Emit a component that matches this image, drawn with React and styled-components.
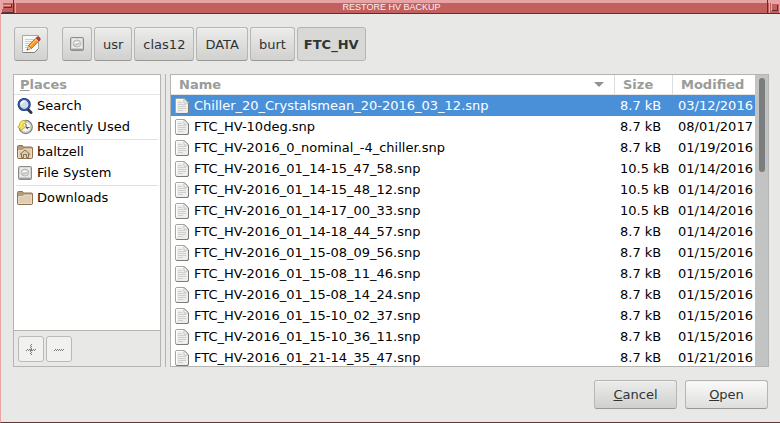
import React from 'react';
import styled, { createGlobalStyle, css } from 'styled-components';

const Global = createGlobalStyle`
  * { box-sizing: border-box; }
  body { margin: 0; background: #e8e8e6; }
  button { margin: 0; font: inherit; color: inherit; }
  body, table { font: 13px/21px "DejaVu Sans", sans-serif; color: #000; }
`;

const Frame = styled.div`
  height: 100vh;
  min-height: 300px;
  display: flex;
  flex-direction: column;
  overflow: hidden;
  border-left: 1px solid #eda6a6;
  border-bottom: 1px solid #5e3838;
`;

const TitleBar = styled.header`
  flex: none;
  display: flex;
  height: 14px;
  margin-left: -1px;
  background: linear-gradient(#e8a4a4 3px, #c26060 3px);
  border-bottom: 1px solid #5a3034;
`;

const Title = styled.h1`
  flex: 1;
  margin: 0;
  border-left: 1px solid #e8a4a4;
  border-right: 1px solid #5a3034;
  font: 9px/14px "Liberation Sans", sans-serif;
  text-align: center;
  color: #fff0ee;
`;

const WindowButton = styled.button`
  display: flex;
  padding: 0;
  border: 0;
  background: none;
`;

const Body = styled.main`
  flex: 1;
  min-height: 0;
  display: flex;
  flex-direction: column;
  gap: 13px;
  padding: 13px 11px 13px 12px;
`;

const PathBar = styled.nav`
  display: flex;
  gap: 2px;
`;

const Button = styled.button`
  display: flex;
  align-items: center;
  justify-content: center;
  padding: 0 8px;
  border: 1px solid #b6b6b3;
  border-bottom-color: #989896;
  border-radius: 3px;
  background: linear-gradient(#ececea, #d0d0ce);
  box-shadow: inset 0 1px #f2f2f1;
  color: #2e3436;
`;

const PathButton = styled(Button)`
  height: 34px;
  padding: 0 ${p => (p.$icon ? '6px' : '8px')};
  ${p => p.$current && css`
    border-color: #b4b4b1;
    background: #d8d8d6;
    box-shadow: none;
    font-weight: bold;
    padding: 0 6px;
  `}
`;

const EditButton = styled(PathButton)`
  width: 34px;
  margin: 0 12px 0 1px;
`;

const Panes = styled.div`
  flex: 1;
  min-height: 0;
  display: flex;
`;

const Places = styled.aside`
  width: 148px;
  display: flex;
  flex-direction: column;
  border: 1px solid #b4b4b1;
`;

const PlacesList = styled.div`
  flex: 1;
  min-height: 0;
  overflow: hidden;
  background: #fff;
`;

const PlacesTitle = styled.h2`
  height: 20px;
  margin: 0;
  padding-left: 6px;
  border-bottom: 1px solid #e4e4e4;
  font: bold 13px/19px "DejaVu Sans", sans-serif;
  color: #999c99;
`;

const Place = styled.a`
  display: flex;
  align-items: center;
  gap: 4px;
  height: 21px;
  padding-left: 3px;
  color: #000;
  text-decoration: none;
`;

const Separator = styled.hr`
  height: 1px;
  margin: 2px 2px 1px;
  border: 0;
  background: #e0e0e0;
`;

const PlacesTools = styled.div`
  display: flex;
  gap: 2px;
  padding: 5px 4px 4px;
  border-top: 1px solid #b4b4b1;
`;

const ToolButton = styled(Button)`
  width: 26px;
  height: 26px;
  padding: 0;
  border-color: #b9b9b7;
  background: #f1f1f0;
`;

const Splitter = styled.div`
  width: 9px;
  padding-left: 4px;
  &::before {
    content: "";
    display: block;
    width: 1px;
    height: 100%;
    background: #b4b4b1;
  }
`;

const Files = styled.section`
  flex: 1;
  min-width: 0;
  display: flex;
  border: 1px solid #b4b4b1;
  background: #fff;
`;

const TableArea = styled.div`
  flex: 1;
  min-width: 0;
  overflow: hidden;
`;

const Table = styled.table`
  width: 100%;
  table-layout: fixed;
  border-collapse: separate;
  border-spacing: 0;
`;

const Head = styled.th`
  width: ${p => p.$width || 'auto'};
  height: 20px;
  padding: 0 10px 0 8px;
  border-bottom: 1px solid #e4e4e4;
  border-right: ${p => (p.$last ? '0' : '1px solid #dededd')};
  line-height: 19px;
  text-align: left;
  white-space: nowrap;
  color: #999c99;
`;

const HeadRow = styled.span`
  display: flex;
  align-items: center;
  justify-content: space-between;
`;

const Row = styled.tr`
  background: ${p => (p.$selected ? '#4a90d9' : '#fff')};
  color: ${p => (p.$selected ? '#fff' : '#000')};
`;

const Cell = styled.td`
  height: 21px;
  padding: 0 0 0 5px;
  white-space: nowrap;
`;

const FileName = styled.span`
  display: flex;
  align-items: center;
  gap: 5px;
  margin-left: -1px;
`;

const ScrollTrack = styled.div`
  width: 13px;
  padding: 3px 3px 3px 4px;
  background: #c2c4c3;
`;

const ScrollThumb = styled.div`
  width: 6px;
  height: 33%;
  border-radius: 3px;
  background: #7a7e7e;
`;

const Actions = styled.footer`
  display: flex;
  justify-content: flex-end;
  gap: 8px;
  padding-right: 1px;
`;

const ActionButton = styled(Button)`
  width: 83px;
  height: 29px;
  ${p => p.$light && 'background: linear-gradient(#fafafa, #dededc);'}
`;

const Svg = styled.svg`
  flex: none;
  display: block;
`;

const DriveIcon = () => (
  <Svg width="16" height="16" viewBox="0 0 16 16">
    <rect x="1.500" y="1.500" width="13" height="13" rx="1" fill="#c9cbc8" stroke="#8b8d89" />
    <path d="M3 2.500h10l.5 9.500h-11z" fill="#ecedeb" />
    <path d="M2 13.500h12" stroke="#9fa19d" />
    <ellipse cx="8" cy="7.500" rx="4" ry="3.500" fill="#dddedb" stroke="#b9bbb7" />
    <path d="M5 10c1-2 3.500-1 5.500-3" fill="none" stroke="#b0b2ae" />
    <path d="M6 6.500h3.500" stroke="#fff" />
  </Svg>
);

const FolderIcon = ({ home }) => (
  <Svg width="16" height="16" viewBox="0 0 16 16">
    <path d="M.5 13.500V2.500Q.5 1.500 1.500 1.500h4l1 1.500h8q1 0 1 1v9.500q0 1-1 1h-13q-1 0-1-1z" fill="#b59b78" stroke="#8c7354" />
    <path d="M1.500 13.500v-7h4.500l1-1.500h7.500v8.500z" fill="#dfccb1" stroke="#eadbc5" />
    {home && (
      <path d="M3 10.500l5-4.500 5 4.500M4.500 9.500v4h2v-3h3v3h2v-4" fill="none" stroke="#8c704d" />
    )}
  </Svg>
);

const SearchIcon = () => (
  <Svg width="16" height="16" viewBox="0 0 16 16">
    <path d="M11 11.500l3 3" stroke="#34363f" strokeWidth="3" strokeLinecap="round" />
    <circle cx="7.200" cy="6.500" r="5.500" fill="#cfdcec" stroke="#1f3a84" strokeWidth="2.200" />
    <circle cx="7.200" cy="6.500" r="5.200" fill="none" stroke="#4a6fc0" strokeWidth=".8" />
    <path d="M4 6.500C4 4.500 5.500 3.500 7.500 3.500" fill="none" stroke="#fff" strokeWidth="1.500" />
  </Svg>
);

const RecentIcon = () => (
  <Svg width="16" height="16" viewBox="0 0 16 16">
    <circle cx="8.700" cy="8" r="6.600" fill="#d9dad6" stroke="#7f817b" strokeWidth="1.200" />
    <circle cx="8.700" cy="8" r="5" fill="#f5f5f3" stroke="#c4c6c0" strokeWidth=".8" />
    <path d="M9 5v3.500h3.500M9 8.500l2 1.500" fill="none" stroke="#555753" />
    <path d="M.6 8L2.500 6.200C2.500 3 4.500 1.600 8.500 1.600V4.500C6.500 4.500 6 5.200 6 6.400L8 8.500 4.500 11z" fill="#f3df4d" stroke="#c7a91e" strokeWidth=".8" />
    <path d="M3.500 7.500C3.500 4.500 4.500 3 7 2.700" fill="none" stroke="#fff6a3" strokeWidth=".8" />
  </Svg>
);

const FileIcon = () => (
  <Svg width="14" height="16" viewBox="0 0 14 16">
    <path d="M2 .5h7.500l4 4V14q0 1.500-1.500 1.500H2Q.5 15.500.5 14V2Q.5.5 2 .5z" fill="#eeeeec" stroke="#a2a4a0" />
    <path d="M1.500 15.500H12q1.500 0 1.500-1.500V5" fill="none" stroke="#7a7c78" />
    <path d="M1.500 13.500v-12h7" fill="none" stroke="#fff" />
    <path d="M3 4.500h4M3 6.500h8M3 8.500h8M3 10.500h8M3 12.500h5" stroke="#cfd0cd" />
    <path d="M9 1v4h4z" fill="#fff" stroke="#b2b4b0" strokeWidth=".8" />
  </Svg>
);

const EditIcon = () => (
  <Svg width="20" height="20" viewBox="0 0 20 20">
    <path d="M1.500 1.500h16v13l-4 4h-12z" fill="#f8f8f7" stroke="#a6a8a4" />
    <path d="M2 18.500h11.500l4-4" fill="none" stroke="#7d7f7b" />
    <path d="M4 5.500h9M4 7.500h7M4 9.500h5M4 11.500h3M4 13.500h3" stroke="#cbcdc9" />
    <path d="M6 16l1.500-4.500 3 3z" fill="#f0d3a0" stroke="#a87839" strokeWidth=".6" />
    <path d="M7.500 11.500L15 4l3 3-7.500 7.500z" fill="#f29b2c" stroke="#a7651a" strokeWidth=".8" />
    <path d="M9 12l7-7" stroke="#fcc970" />
    <path d="M14 5l1-1 3 3-1 1z" fill="#c9ccd0" />
    <path d="M15.200 3.800q1.500-1.800 3.200-.4t0 3.400l-.4.400z" fill="#d93636" stroke="#a31c1c" strokeWidth=".7" />
    <path d="M5.500 16.500l1-1.800 1 1z" fill="#2e3436" />
  </Svg>
);

const DottedGlyph = ({ plus }) => (
  <Svg width="11" height="11" viewBox="0 0 11 11" shapeRendering="crispEdges">
    <path d="M1 5.500h10" stroke="#7b7e7c" strokeDasharray="1 1" />
    <path d="M0 6.500h10" stroke="#7b7e7c" strokeDasharray="1 1" />
    {plus && <path d="M5.500 0v11" stroke="#7b7e7c" strokeDasharray="1 1" />}
    {plus && <path d="M4.500 1v10" stroke="#7b7e7c" strokeDasharray="1 1" />}
  </Svg>
);

const files = [
  ['Chiller_20_Crystalsmean_20-2016_03_12.snp', '8.7 kB', '03/12/2016'],
  ['FTC_HV-10deg.snp', '8.7 kB', '08/01/2017'],
  ['FTC_HV-2016_0_nominal_-4_chiller.snp', '8.7 kB', '01/19/2016'],
  ['FTC_HV-2016_01_14-15_47_58.snp', '10.5 kB', '01/14/2016'],
  ['FTC_HV-2016_01_14-15_48_12.snp', '10.5 kB', '01/14/2016'],
  ['FTC_HV-2016_01_14-17_00_33.snp', '10.5 kB', '01/14/2016'],
  ['FTC_HV-2016_01_14-18_44_57.snp', '8.7 kB', '01/14/2016'],
  ['FTC_HV-2016_01_15-08_09_56.snp', '8.7 kB', '01/15/2016'],
  ['FTC_HV-2016_01_15-08_11_46.snp', '8.7 kB', '01/15/2016'],
  ['FTC_HV-2016_01_15-08_14_24.snp', '8.7 kB', '01/15/2016'],
  ['FTC_HV-2016_01_15-10_02_37.snp', '8.7 kB', '01/15/2016'],
  ['FTC_HV-2016_01_15-10_36_11.snp', '8.7 kB', '01/15/2016'],
  ['FTC_HV-2016_01_21-14_35_47.snp', '8.7 kB', '01/21/2016'],
];

export default function App() {
  return (
    <Frame>
      <Global />
      <TitleBar>
        <WindowButton aria-label="Window menu">
          <Svg width="15" height="13" viewBox="0 0 15 13" shapeRendering="crispEdges">
            <path d="M0 3h2v10H0z" fill="#e8a4a4" />
            <path d="M4 7.500h8M11.500 4v4M2 12.500h12M13.500 0v13" fill="none" stroke="#5a3034" />
            <path d="M3 5.500h8M2.500 3v6" stroke="#e8a4a4" />
          </Svg>
        </WindowButton>
        <Title>RESTORE HV BACKUP</Title>
        <WindowButton aria-label="Maximize">
          <Svg width="12" height="13" viewBox="0 0 12 13" shapeRendering="crispEdges">
            <path d="M1.500 0v13" stroke="#e8a4a4" />
            <path d="M3.500 10.500v-7h7" fill="none" stroke="#e8a4a4" />
            <path d="M3.500 10.500h6v-6" fill="none" stroke="#5a3034" />
            <path d="M11.500 3v10" stroke="#e8a4a4" />
          </Svg>
        </WindowButton>
      </TitleBar>
      <Body>
        <PathBar aria-label="Path">
          <EditButton $icon aria-label="Type a file name"><EditIcon /></EditButton>
          <PathButton $icon aria-label="File system root"><DriveIcon /></PathButton>
          <PathButton>usr</PathButton>
          <PathButton>clas12</PathButton>
          <PathButton>DATA</PathButton>
          <PathButton>burt</PathButton>
          <PathButton $current aria-current="page">FTC_HV</PathButton>
        </PathBar>
        <Panes>
          <Places>
            <PlacesList>
              <PlacesTitle><u>P</u>laces</PlacesTitle>
              <Place href="#search"><SearchIcon />Search</Place>
              <Place href="#recent"><RecentIcon />Recently Used</Place>
              <Separator />
              <Place href="#home"><FolderIcon home />baltzell</Place>
              <Place href="#root"><DriveIcon />File System</Place>
              <Separator />
              <Place href="#downloads"><FolderIcon />Downloads</Place>
            </PlacesList>
            <PlacesTools>
              <ToolButton disabled aria-label="Add bookmark"><DottedGlyph plus /></ToolButton>
              <ToolButton disabled aria-label="Remove bookmark"><DottedGlyph /></ToolButton>
            </PlacesTools>
          </Places>
          <Splitter />
          <Files>
            <TableArea>
              <Table>
                <thead>
                  <tr>
                    <Head>
                      <HeadRow>
                        Name
                        <Svg width="10" height="5" viewBox="0 0 10 5"><path d="M0 0h10L5 5z" fill="#8f9391" /></Svg>
                      </HeadRow>
                    </Head>
                    <Head $width="58px">Size</Head>
                    <Head $width="82px" $last>Modified</Head>
                  </tr>
                </thead>
                <tbody>
                  {files.map(([name, size, date], i) => (
                    <Row key={name} $selected={i === 0}>
                      <Cell><FileName><FileIcon />{name}</FileName></Cell>
                      <Cell>{size}</Cell>
                      <Cell>{date}</Cell>
                    </Row>
                  ))}
                </tbody>
              </Table>
            </TableArea>
            <ScrollTrack><ScrollThumb /></ScrollTrack>
          </Files>
        </Panes>
        <Actions>
          <ActionButton><span><u>C</u>ancel</span></ActionButton>
          <ActionButton $light><span><u>O</u>pen</span></ActionButton>
        </Actions>
      </Body>
    </Frame>
  );
}
